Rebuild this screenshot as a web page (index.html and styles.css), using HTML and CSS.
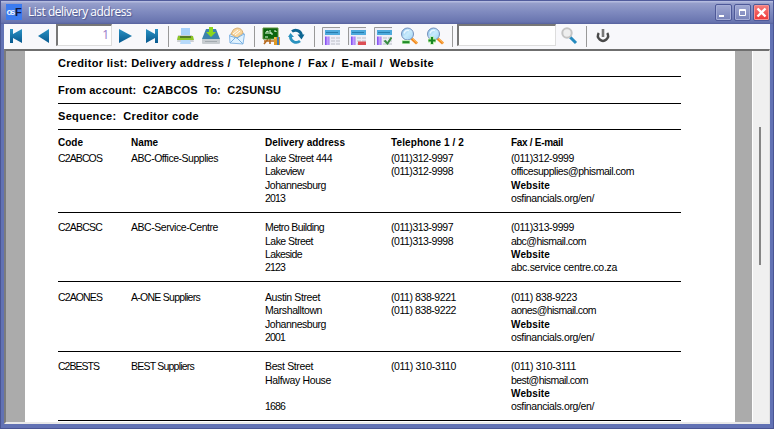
FILE: index.html
```html
<!DOCTYPE html>
<html lang="en">
<head>
<meta charset="utf-8">
<title>List delivery address</title>
<link rel="stylesheet" href="styles.css">
</head>
<body>
<div class="window">
  <header class="titlebar">
    <span class="logo"><span class="logo-os">os</span><span class="logo-f">F</span></span>
    <span class="caption">List delivery address</span>
    <span class="btn"><svg width="15" height="15"><path d="M3 11h5" stroke="#fff" stroke-width="2"/></svg></span>
    <span class="btn"><svg width="15" height="15"><path d="M4.500 4.500h6v6h-6zM4 5.500h7" fill="none" stroke="#fff"/></svg></span>
    <span class="btn close"><svg width="15" height="15"><path d="M3.500 3.500l8 8M11.500 3.500l-8 8" stroke="#fff" stroke-width="2.300"/></svg></span>
  </header>
  <nav class="toolbar">
    <svg width="0" height="0" class="defs"><defs>
      <linearGradient id="blue" x2="0" y2="1"><stop stop-color="#2a92c4"/><stop offset="1" stop-color="#07598f"/></linearGradient>
      <linearGradient id="lens" x2="1" y2="1"><stop stop-color="#7db7ea"/><stop offset=".5" stop-color="#c8ebfc"/><stop offset="1" stop-color="#9fd2f4"/></linearGradient>
      <linearGradient id="form" x2="1"><stop stop-color="#7a42ed"/><stop offset=".6" stop-color="#c5a4ff"/><stop offset="1" stop-color="#9a6cf3"/></linearGradient>
      <g id="sheet"><path d="M.5 18V.5H18" fill="none" stroke="#999"/><path d="M1 1h17v17H1z" fill="#eeeff7"/><path d="M3 3h15v5H3z" fill="#4daadd"/><path d="M4 5.500h12" stroke="#287dae"/><path d="M3 9.500h4.500V18H3z" fill="url(#form)"/><path d="M9 10h4v2H9zm5 0h4v2h-4zM9 13h4v2H9zm5 0h4v2h-4zM9 16h4v2H9zm5 0h4v2h-4z" fill="#d5d7df"/></g>
      <g id="glass"><path d="M11.500 11.500l5.500 5" stroke="#f18b24" stroke-width="3"/><path d="M12.500 11.500l5 4.500" stroke="#ffc364"/><circle cx="7.500" cy="7" r="6" fill="url(#lens)" stroke="#738fbb"/><path d="M4 6.500q1-4 5-3" fill="none" stroke="#e9f7ff" stroke-width="1.500"/></g>
    </defs></svg>
    <span class="tool"><svg viewBox="0 0 18 18"><path d="M2 2h3v5l9-5v14l-9-5v5H2z" fill="url(#blue)"/></svg></span>
    <span class="tool"><svg viewBox="0 0 18 18"><path d="M15 2v14L4 9z" fill="url(#blue)"/></svg></span>
    <span class="field page-no">1</span>
    <span class="tool"><svg viewBox="0 0 18 18"><path d="M3 2v14l13-7z" fill="url(#blue)"/></svg></span>
    <span class="tool"><svg viewBox="0 0 18 18"><path d="M16 2h-3v5L4 2v14l9-5v5h3z" fill="url(#blue)"/></svg></span>
    <i class="sep"></i>
    <span class="tool"><svg viewBox="0 0 18 18"><path d="M5 1h9v9H5z" fill="#a8d2fb"/><path d="M2 8h14l2 7H1z" fill="#cdd0d5"/><path d="M2 9l-1 4h17l-1-4z" fill="#8dc529"/><path d="M4 9h11v2H4z" fill="#547b2a"/><path d="M5 13h9l1 4H4z" fill="#b7dafa"/></svg></span>
    <span class="tool"><svg viewBox="0 0 18 18"><path d="M4 2h10l4 10H0z" fill="#3b83ad"/><path d="M0 12h18v4q0 1-1 1H1q-1 0-1-1z" fill="#c7ccd0"/><path d="M3 14.500h12" stroke="#a4abb0"/><path d="M7 0h4v5h3L9 10 4 5h3z" fill="#8bd71c"/></svg></span>
    <span class="tool"><svg viewBox="0 0 18 18"><path d="M1.500 8L9 3l7.500 4-1.500 10-13-1z" fill="#dff2ff" stroke="#87b7e5"/><path d="M3 7q2-6 6-6 5 0 6 5L9 11z" fill="#f9d59a" stroke="#d7af76"/><path d="M5 7l5-4M7 8l5-4" stroke="#fff"/><path d="M2 9l7 2 7-4M2 16l6-6 7 7" fill="none" stroke="#78afe0"/></svg></span>
    <i class="sep"></i>
    <span class="tool"><svg viewBox="0 0 18 18"><path d="M6 12l-4 5M8 12v5M2 14h10" stroke="#b6691e" stroke-width="1.600"/><path d="M1 1h15v11H1z" fill="#0c650f" stroke="#5e923c"/><path d="M4 7V5l2-1v3m2 0V3m0 3h2v2m2-4h2v1M3 10h3" fill="none" stroke="#e6ffe4"/><path d="M12 10h6v8h-6z" fill="#e19a22"/><path d="M15 10h2v8h-2z" fill="#4179b4"/><path d="M12 11h2" stroke="#ffe072"/></svg></span>
    <span class="tool"><svg viewBox="0 0 18 18"><path d="M2.500 9A5.800 5.800 0 0 0 12 14" fill="none" stroke="#2a92bf" stroke-width="2.800"/><path d="M4 4.500A6 6 0 0 1 13.500 8" fill="none" stroke="#0d6592" stroke-width="2.800"/><path d="M9.500 7.500h7l-3 5z" fill="#0d6592"/><path d="M0 10l2.500-4L6 10z" fill="#2a92bf"/></svg></span>
    <i class="sep"></i>
    <span class="tool"><svg viewBox="0 0 18 18"><use href="#sheet"/></svg></span>
    <span class="tool"><svg viewBox="0 0 18 18"><use href="#sheet"/><path d="M10 14.500h8V18h-8z" fill="#dc4e55"/></svg></span>
    <span class="tool"><svg viewBox="0 0 18 18"><use href="#sheet"/><path d="M10.500 13.500l3 3 4-6" fill="none" stroke="#388c43" stroke-width="2"/></svg></span>
    <span class="tool"><svg viewBox="0 0 18 18"><use href="#glass"/><path d="M2 13h8v4H2z" fill="#c0efb8"/><path d="M2.500 15.200h7" stroke="#218b28" stroke-width="2.200"/></svg></span>
    <span class="tool"><svg viewBox="0 0 18 18"><use href="#glass"/><path d="M6 9.500v8M2 13.500h8" stroke="#b8eba9" stroke-width="4"/><path d="M6 10v7M2.500 13.500h7" stroke="#168722" stroke-width="2"/></svg></span>
    <i class="sep"></i>
    <span class="field search"></span>
    <span class="tool"><svg viewBox="0 0 18 18"><path d="M10 10l6 6" stroke="#258abf" stroke-width="3"/><circle cx="7" cy="6" r="4.700" fill="#eee" stroke="#c4c4c4" stroke-width="2"/></svg></span>
    <i class="sep"></i>
    <span class="tool"><svg viewBox="0 0 18 18"><path d="M4.800 6A5 5 0 1 0 13.200 6" fill="none" stroke="#4a4a4a" stroke-width="2.400"/><path d="M9 2v8" stroke="#777" stroke-width="2.600"/></svg></span>
  </nav>
  <main class="viewer">
    <article class="page">
      <h1 class="heading first"><span data-width="376">Creditor list: Delivery address /  Telephone /  Fax /  E-mail /  Website</span></h1>
      <h2 class="heading second"><span data-width="223">From account:  C2ABCOS  To:  C2SUNSU</span></h2>
      <h2 class="heading third"><span data-width="141">Sequence:  Creditor code</span></h2>
      <section class="record head">
        <div><b data-width="25">Code</b></div><div><b data-width="27">Name</b></div><div><b data-width="80">Delivery address</b></div><div><b data-width="73">Telephone 1 / 2</b></div><div><b data-width="52">Fax / E-mail</b></div>
      </section>
      <section class="record one">
        <div><span data-width="44">C2ABCOS</span></div>
        <div><span data-width="87">ABC-Office-Supplies</span></div>
        <div><span data-width="67">Lake Street 444</span><span data-width="39">Lakeview</span><span data-width="61">Johannesburg</span><span data-width="20">2013</span></div>
        <div><span data-width="62">(011)312-9997</span><span data-width="62">(011)312-9998</span></div>
        <div><span data-width="63">(011)312-9999</span><span data-width="123">officesupplies@phismail.com</span><b data-width="39">Website</b><span data-width="83">osfinancials.org/en/</span></div>
      </section>
      <section class="record">
        <div><span data-width="44">C2ABCSC</span></div>
        <div><span data-width="87">ABC-Service-Centre</span></div>
        <div><span data-width="59">Metro Building</span><span data-width="48">Lake Street</span><span data-width="37">Lakeside</span><span data-width="20">2123</span></div>
        <div><span data-width="62">(011)313-9997</span><span data-width="62">(011)313-9998</span></div>
        <div><span data-width="63">(011)313-9999</span><span data-width="75">abc@hismail.com</span><b data-width="39">Website</b><span data-width="106">abc.service centre.co.za</span></div>
      </section>
      <section class="record tall">
        <div><span data-width="44">C2AONES</span></div>
        <div><span data-width="69">A-ONE Suppliers</span></div>
        <div><span data-width="55">Austin Street</span><span data-width="57">Marshalltown</span><span data-width="61">Johannesburg</span><span data-width="20">2001</span></div>
        <div><span data-width="65">(011) 838-9221</span><span data-width="65">(011) 838-9222</span></div>
        <div><span data-width="66">(011) 838-9223</span><span data-width="85">aones@hismail.com</span><b data-width="39">Website</b><span data-width="83">osfinancials.org/en/</span></div>
      </section>
      <section class="record">
        <div><span data-width="41">C2BESTS</span></div>
        <div><span data-width="63">BEST Suppliers</span></div>
        <div><span data-width="48">Best Street</span><span data-width="66">Halfway House</span><span></span><span data-width="20">1686</span></div>
        <div><span data-width="65">(011) 310-3110</span></div>
        <div><span data-width="65">(011) 310-3111</span><span data-width="77">best@hismail.com</span><b data-width="39">Website</b><span data-width="83">osfinancials.org/en/</span></div>
      </section>
    </article>
    <aside class="scrollbar"><div class="thumb"></div></aside>
  </main>
</div>
<script src="fit.js"></script>
</body>
</html>
```
FILE: styles.css
```css
* { box-sizing: border-box; }
body { margin: 0; overflow: hidden; font-family: "Liberation Sans", Arial, sans-serif; }
svg { display: block; }
.window { width: 774px; height: 429px; display: flex; flex-direction: column; padding: 0 3px 4px; background: #6272b4; border: solid #4a5593; border-width: 0 1px 1px; }
.titlebar { height: 24px; margin: 0 -3px; display: flex; align-items: center; padding: 0 3px 0 5px; background: linear-gradient(#515c9c 0, #515c9c 1px, #b4bbdf 1px, #b4bbdf 2px, #969fcb 3px, #7f8abf 12px, #6874af 22px, #56619e 24px); }
.logo { width: 16px; height: 16px; background: #3b7bf0; display: flex; align-items: center; justify-content: center; line-height: 16px; font-weight: bold; }
.logo-os { font-size: 9px; color: #e6f0ff; letter-spacing: -1.500px; }
.logo-f { font-size: 11px; color: #10183f; margin-left: 1px; }
.caption { font: 12px/20px "Open Sans", "Noto Sans", sans-serif; letter-spacing: -.500px; color: #fff; margin: 0 auto 0 6px; text-shadow: 1px 1px 1px #4c568f; }
.btn { width: 17px; height: 17px; margin: 1px 0 0 2px; border: 1px solid #4e5998; border-radius: 2px; background: linear-gradient(#a1a9d2, #7782b9); box-shadow: inset 0 0 0 1px #a5add7; }
.btn.close { background: linear-gradient(#f58080, #ef3535); box-shadow: inset 0 0 0 1px #f79393; }
.toolbar { height: 25px; flex: none; display: flex; background: #f8f8fb; }
.defs { position: absolute; }
.tool { width: 26px; height: 25px; display: flex; justify-content: center; padding-top: 3px; }
.tool svg { width: 18px; height: 18px; }
.sep { width: 1px; height: 21px; margin: 2px 3px 0 4px; background: #999; }
.field { height: 22px; background: #fff; border: solid; border-width: 2px 1px 1px 2px; border-color: #777 #ddd #ddd #777; }
.page-no { width: 56px; font: 12px/17px "Open Sans", sans-serif; text-align: right; padding-right: 2px; color: #9678c8; }
.search { width: 99px; margin-left: 1px; }
.viewer { flex: 1; min-height: 0; display: flex; border: solid; border-width: 2px 1px 2px 2px; border-color: #6f6f6f #e3e3e3 #e9e9e9 #7c7c7c; background: #ababab; overflow: hidden; }
.page { width: 710px; margin-left: 19px; height: 372px; padding: 0 54px 0 33px; background: #fff; overflow: hidden; color: #000; }
.scrollbar { margin-left: auto; width: 17px; border-left: 1px solid #fff; background: #f0f0f0; padding: 76px 0 0 6px; }
.thumb { width: 2px; height: 138px; background: #858585; }
.heading { margin: 0; font-size: 11px; border-bottom: 1px solid #000; white-space: pre; }
.first { height: 26px; line-height: 24px; }
.second { height: 27px; line-height: 27px; }
.third { height: 26px; line-height: 25px; }
.record { height: 69px; padding-top: 8.300px; display: grid; grid-template-columns: 73px 134px 126px 120px 1fr; font-size: 10.500px; line-height: 13.300px; border-bottom: 1px solid #000; }
.record span, .record b { display: block; height: 13.300px; width: max-content; white-space: pre; }
.record b { font-size: 10px; }
.head { height: 22px; padding-top: 6px; border: 0; }
.one { height: 61px; padding-top: 0; }
.tall { height: 70px; padding-top: 9px; }
```
FILE: fit.js
```js
// Spread each printed string over its measured print width.
document.querySelectorAll("[data-width]").forEach(el => {
  const gap = (Number(el.dataset.width) - el.getBoundingClientRect().width) / el.textContent.length;
  el.style.letterSpacing = gap + "px";
});
```
